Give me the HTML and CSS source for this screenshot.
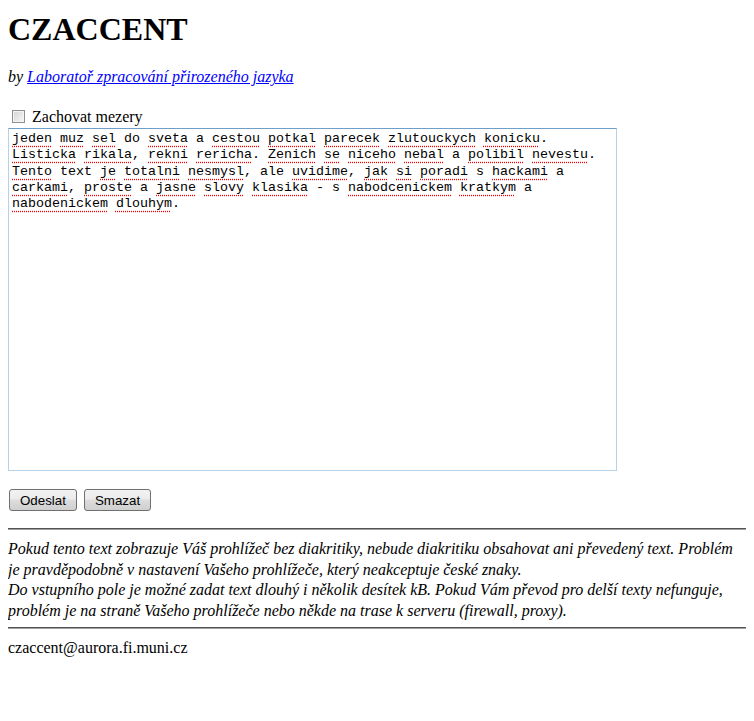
FILE: index.html
```html
<!DOCTYPE html>
<html lang="cs">
<head>
    <meta charset="UTF-8">
    <meta name="viewport" content="width=device-width, initial-scale=1.0">
    <title>CZACCENT</title>
    <link rel="stylesheet" href="styles.css">
</head>
<body>
    <h1 class="title">CZACCENT</h1>
    <p class="byline"><i>by <a href="#">Laboratoř zpracování přirozeného jazyka</a></i></p>

    <form class="convert-form">
        <label class="keep-spaces"><input type="checkbox" name="mezery"> Zachovat mezery</label>
        <div class="input-box" contenteditable="true" spellcheck="false"><span class="sp">jeden</span> <span class="sp">muz</span> <span class="sp">sel</span> do <span class="sp">sveta</span> a <span class="sp">cestou</span> <span class="sp">potkal</span> <span class="sp">parecek</span> <span class="sp">zlutouckych</span> <span class="sp">konicku</span>. <span class="sp">Listicka</span> <span class="sp">rikala</span>, <span class="sp">rekni</span> <span class="sp">rericha</span>. <span class="sp">Zenich</span> <span class="sp">se</span> <span class="sp">niceho</span> <span class="sp">nebal</span> a <span class="sp">polibil</span> <span class="sp">nevestu</span>. <span class="sp">Tento</span> text <span class="sp">je</span> <span class="sp">totalni</span> <span class="sp">nesmysl</span>, ale <span class="sp">uvidime</span>, <span class="sp">jak</span> <span class="sp">si</span> <span class="sp">poradi</span> s <span class="sp">hackami</span> a <span class="sp">carkami</span>, <span class="sp">proste</span> a <span class="sp">jasne</span> <span class="sp">slovy</span> <span class="sp">klasika</span> - s <span class="sp">nabodcenickem</span> <span class="sp">kratkym</span> a <span class="sp">nabodenickem</span> <span class="sp">dlouhym</span>.</div>
        <div class="buttons">
            <button type="submit" class="btn">Odeslat</button>
            <button type="reset" class="btn">Smazat</button>
        </div>
    </form>

    <hr class="rule">
    <p class="note"><i>Pokud tento text zobrazuje Váš prohlížeč bez diakritiky, nebude diakritiku obsahovat ani převedený text. Problém je pravděpodobně v nastavení Vašeho prohlížeče, který neakceptuje české znaky.<br>Do vstupního pole je možné zadat text dlouhý i několik desítek kB. Pokud Vám převod pro delší texty nefunguje, problém je na straně Vašeho prohlížeče nebo někde na trase k serveru (firewall, proxy).</i></p>
    <hr class="rule rule-bottom">
    <p class="contact">czaccent@aurora.fi.muni.cz</p>
</body>
</html>
```

FILE: styles.css
```css
body {
    margin: 8px;
    font-family: 'Liberation Serif', 'Times New Roman', serif;
    font-size: 16px;
    color: #000;
    background-color: #fff;
}

.title {
    margin: 3px 0 0;
    font-size: 32px;
    line-height: 37px;
    font-weight: bold;
}

.byline {
    margin: 20px 0 0;
}

.byline a {
    color: #0000ff;
}

.convert-form {
    margin: 22px 0 0;
}

.keep-spaces {
    display: block;
    height: 20px;
    line-height: 18px;
}

.keep-spaces input {
    appearance: none;
    -webkit-appearance: none;
    width: 13px;
    height: 13px;
    margin: 0 3px 0 4px;
    vertical-align: -1px;
    border: 1px solid #8e8f8f;
    box-shadow: inset 0 0 0 1px #f3f3f3;
    background: linear-gradient(135deg, #d4d4d4, #f7f7f7);
}

.input-box {
    box-sizing: border-box;
    width: 609px;
    height: 343px;
    padding: 2px 3px;
    border: 1px solid #b4d2ea;
    border-top-color: #6f9fc9;
    font-family: 'Liberation Mono', 'Courier New', monospace;
    font-size: 13.33px;
    line-height: 16.25px;
    overflow: hidden;
    outline: none;
}

.sp {
    text-decoration: underline dotted #ff0000;
    text-underline-offset: 4px;
}

.buttons {
    display: flex;
    gap: 7px;
    margin: 18px 0 0 1px;
}

.btn {
    height: 22px;
    padding: 0 10px;
    border: 1px solid #707070;
    border-radius: 3px;
    background: linear-gradient(#f2f2f2 0%, #ebebeb 45%, #dddddd 50%, #cfcfcf 100%);
    font-family: 'Liberation Sans', Arial, sans-serif;
    font-size: 13.33px;
    color: #000;
    cursor: pointer;
}

.rule {
    height: 0;
    margin: 17px 0 0;
    border: none;
    border-top: 1px solid #555;
    border-bottom: 1px solid #a0a0a0;
}

.rule-bottom {
    margin-top: 6px;
}

.note {
    margin: 9px 0 0;
    line-height: 20.5px;
}

.contact {
    margin: 10px 0 0;
}
```
